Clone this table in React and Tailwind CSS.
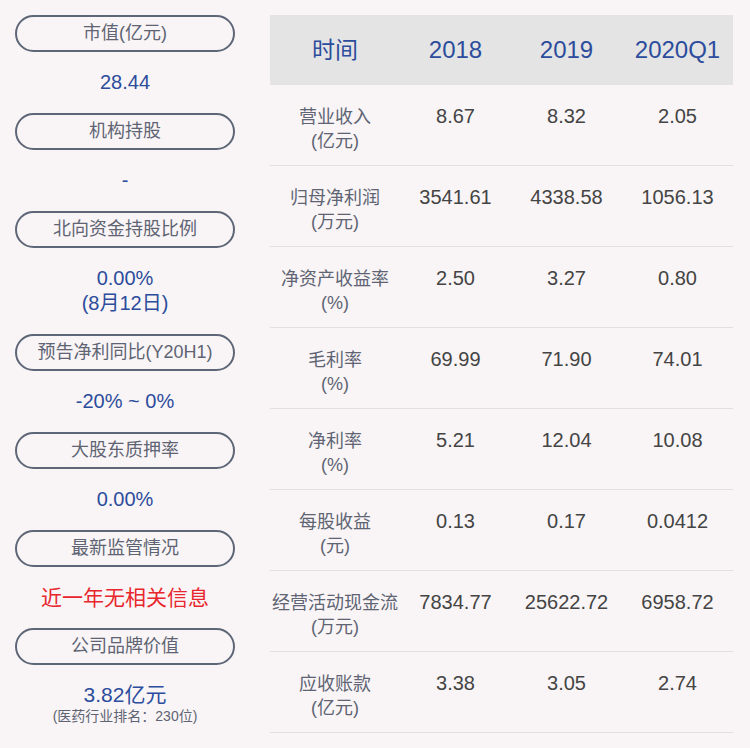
const font = { fontFamily: '"Liberation Sans", "Noto Sans CJK SC", sans-serif' };

const left = [
  { label: '市值(亿元)', values: ['28.44'] },
  { label: '机构持股', values: ['-'] },
  { label: '北向资金持股比例', values: ['0.00%', '(8月12日)'] },
  { label: '预告净利同比(Y20H1)', values: ['-20% ~ 0%'] },
  { label: '大股东质押率', values: ['0.00%'] },
  { label: '最新监管情况', values: ['近一年无相关信息'], red: true },
];

const rows = [
  ['营业收入', '(亿元)', '8.67', '8.32', '2.05'],
  ['归母净利润', '(万元)', '3541.61', '4338.58', '1056.13'],
  ['净资产收益率', '(%)', '2.50', '3.27', '0.80'],
  ['毛利率', '(%)', '69.99', '71.90', '74.01'],
  ['净利率', '(%)', '5.21', '12.04', '10.08'],
  ['每股收益', '(元)', '0.13', '0.17', '0.0412'],
  ['经营活动现金流', '(万元)', '7834.77', '25622.72', '6958.72'],
  ['应收账款', '(亿元)', '3.38', '3.05', '2.74'],
];

function Pill({ children }) {
  return (
    <div className="h-[37px] w-[220px] rounded-full border-2 border-[#5e6777] flex items-center justify-center text-[18px] text-[#5e6473]">
      {children}
    </div>
  );
}

export default function App() {
  return (
    <div className="w-[750px] h-[748px] bg-[#f9f5f6] flex overflow-hidden" style={font}>
      <div className="w-[255px] pl-[15px] pt-[15px] flex flex-col">
        {left.map((item) => (
          <div key={item.label} className="flex flex-col">
            <Pill>{item.label}</Pill>
            <div className="w-[220px] py-[18px] flex flex-col items-center">
              {item.values.map((v) => (
                <div
                  key={v}
                  className={item.red ? 'text-[21px] leading-[25px] text-[#e8262d]' : 'text-[20px] leading-[25px] text-[#2c4c9c]'}
                >
                  {v}
                </div>
              ))}
            </div>
          </div>
        ))}
        <Pill>公司品牌价值</Pill>
        <div className="w-[220px] pt-[18px] flex flex-col items-center">
          <div className="text-[21px] leading-[24px] text-[#2c4c9c]">3.82亿元</div>
          <div className="text-[14px] leading-[16px] text-[#5e6473]">
            (医药行业排名<span className="font-['Noto_Sans_CJK_SC']">：</span>230位)
          </div>
        </div>
      </div>
      <div className="pt-[15px] pl-[15px]">
        <div className="w-[463px]">
          <div className="h-[70px] bg-[#e4e4e4] grid grid-cols-[130px_111px_111px_111px] items-center text-center text-[24px] text-[#2c4c9c]">
            <div className="text-[23px]">时间</div>
            <div>2018</div>
            <div>2019</div>
            <div>2020Q1</div>
          </div>
          {rows.map((r) => (
            <div key={r[0]} className="h-[81px] border-b border-[#e3dfe0] grid grid-cols-[130px_111px_111px_111px] pt-[20px] text-center">
              <div className="text-[18px] leading-[24px] text-[#5e6473]">
                <div>{r[0]}</div>
                <div>{r[1]}</div>
              </div>
              <div className="text-[20px] leading-[22px] text-[#444]">{r[2]}</div>
              <div className="text-[20px] leading-[22px] text-[#444]">{r[3]}</div>
              <div className="text-[20px] leading-[22px] text-[#444]">{r[4]}</div>
            </div>
          ))}
        </div>
      </div>
    </div>
  );
}
